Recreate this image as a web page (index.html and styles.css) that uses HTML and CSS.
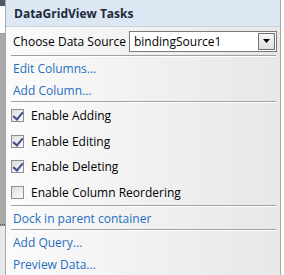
FILE: index.html
```html
<!DOCTYPE html>
<html lang="en">
<head>
    <meta charset="UTF-8">
    <title>DataGridView Tasks</title>
    <link rel="stylesheet" href="styles.css">
</head>
<body>
    <div class="stage">
        <div class="backdrop">
            <div class="bd-top"></div>
            <div class="bd-grid"></div>
            <div class="bd-low"></div>
        </div>
        <div class="tasks">
            <div class="tasks-header">DataGridView Tasks</div>
            <div class="tasks-body">
                <div class="row choose">
                    <span>Choose Data Source</span>
                    <div class="combo">
                        <span class="combo-text">bindingSource1</span>
                        <span class="combo-btn">
                            <svg width="7" height="4" viewBox="0 0 7 4"><path d="M0 0h7L3.5 4z" fill="#000"/></svg>
                        </span>
                    </div>
                </div>
                <div class="sep"></div>
                <div class="row link">Edit Columns...</div>
                <div class="row link">Add Column...</div>
                <div class="sep"></div>
                <label class="row check"><span class="box on"></span>Enable Adding</label>
                <label class="row check"><span class="box on"></span>Enable Editing</label>
                <label class="row check"><span class="box on"></span>Enable Deleting</label>
                <label class="row check"><span class="box"></span>Enable Column Reordering</label>
                <div class="sep"></div>
                <div class="row link">Dock in parent container</div>
                <div class="sep"></div>
                <div class="row link">Add Query...</div>
                <div class="row link">Preview Data...</div>
            </div>
        </div>
        <div class="edge"></div>
    </div>
</body>
</html>
```

FILE: styles.css
```css
* {
    margin: 0;
    padding: 0;
    box-sizing: border-box;
}

body {
    width: 284px;
    height: 275px;
    overflow: hidden;
    background: #fff;
    font-family: "Open Sans", "DejaVu Sans", sans-serif;
    font-size: 12px;
    color: #000;
}

.stage {
    display: flex;
    height: 275px;
}

/* strip of the designer surface visible on the left */
.backdrop {
    width: 5px;
    display: flex;
    flex-direction: column;
    background: #f0f0f0;
}

.bd-top {
    height: 34px;
    border-top: 6px solid #4a5a6a;
    border-bottom: 1px solid #a0a0a0;
    background: #fff;
}

.bd-grid {
    flex: 1;
    background: #a9a9a9;
    border-bottom: 1px dotted #555;
}

.bd-low {
    height: 50px;
    background: #e8e8e8;
    border-top: 1px solid #888;
}

.tasks {
    width: 276px;
    border-left: 1px solid #a7a7a7;
    border-right: 1px solid #a7a7a7;
    display: flex;
    flex-direction: column;
}

.tasks-header {
    height: 27px;
    padding: 5px 0 0 8px;
    background: #dde7f3;
    border-bottom: 1px solid #c9d3de;
    font-weight: bold;
    color: #1b2a3a;
}

.tasks-body {
    flex: 1;
    background: linear-gradient(to right, #fbfbfb, #e7e7e7);
    padding: 0 3px 0 4px;
}

.row {
    display: flex;
    align-items: center;
    height: 22px;
    padding-left: 3px;
}

.choose {
    height: 28px;
    justify-content: space-between;
}

.combo {
    width: 148px;
    height: 21px;
    border: 1px solid #7a7a7a;
    background: #fff;
    display: flex;
    align-items: center;
    justify-content: space-between;
    padding: 0 1px 0 4px;
}

.combo-btn {
    width: 17px;
    height: 17px;
    border: 1px solid #707070;
    background: linear-gradient(#f6f6f6, #dedede);
    display: flex;
    align-items: center;
    justify-content: center;
}

.sep {
    height: 2px;
    margin: 0 1px;
    border-top: 1px solid #a0a0a0;
    border-bottom: 1px solid #fff;
}

.link {
    color: #1f6ec0;
}

.check {
    height: 25.5px;
    gap: 7px;
    padding-left: 1px;
}

.box {
    width: 13px;
    height: 13px;
    border: 1px solid #8e8f8f;
    background: linear-gradient(135deg, #dcdcdc, #fdfdfd);
    position: relative;
}

.box.on::after {
    content: "";
    position: absolute;
    left: 3px;
    top: 0;
    width: 4px;
    height: 8px;
    border-right: 2px solid #3e4f8a;
    border-bottom: 2px solid #3e4f8a;
    transform: rotate(40deg);
}

.edge {
    flex: 1;
    background: #fff;
}
```
